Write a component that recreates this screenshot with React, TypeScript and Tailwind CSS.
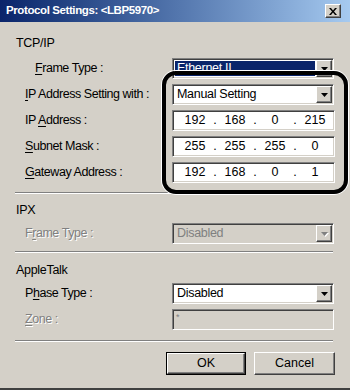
import React from 'react';

const font = { fontFamily: "'Liberation Sans', Arial, sans-serif" };

const sunken =
  'border border-t-[#808080] border-l-[#808080] border-b-white border-r-white shadow-[inset_1px_1px_0_#404040,inset_-1px_-1px_0_#d4d0c8]';
const raised =
  'border border-t-white border-l-white border-b-[#404040] border-r-[#404040] shadow-[inset_-1px_-1px_0_#808080]';

const Arrow: React.FC<{ disabled?: boolean }> = ({ disabled }) => (
  <div className={`w-[16px] h-[17px] bg-[#d4d0c8] flex items-center justify-center ${raised}`}>
    <svg width="7" height="4" viewBox="0 0 7 4" className={disabled ? 'drop-shadow-[1px_1px_0_#fff]' : ''}>
      <path d="M0 0h7L3.5 4z" fill={disabled ? '#808080' : '#000'} />
    </svg>
  </div>
);

const Combo: React.FC<{ value: string; selected?: boolean; disabled?: boolean }> = ({ value, selected, disabled }) => (
  <div className={`w-[162px] h-[21px] flex items-center justify-between ${disabled ? 'bg-[#d4d0c8]' : 'bg-white'} ${sunken} px-[1px]`}>
    <span
      className={`ml-[1px] h-[15px] flex items-center px-[2px] text-[12.5px] tracking-[-0.3px] leading-none ${
        selected ? 'bg-[#0a246a] text-white w-[140px]' : disabled ? 'text-[#808080]' : 'text-black'
      }`}
    >
      {value}
    </span>
    <Arrow disabled={disabled} />
  </div>
);

const IpField: React.FC<{ parts: string[] }> = ({ parts }) => (
  <div className={`w-[163px] h-[21px] bg-white flex items-center pl-[7px] text-[12.5px] ${sunken}`}>
    {parts.map((p, i) => (
      <React.Fragment key={i}>
        <span className="w-[30px] text-center">{p}</span>
        {i < 3 && <span className="w-[10px] text-center">.</span>}
      </React.Fragment>
    ))}
  </div>
);

const Label: React.FC<{ text: string; u: number; indent?: boolean; disabled?: boolean }> = ({ text, u, indent, disabled }) => (
  <span
    className={`${indent ? 'pl-[35px]' : 'pl-[25px]'} w-[172px] shrink-0 text-[12.5px] tracking-[-0.45px] ${
      disabled ? 'text-[#808080] [text-shadow:1px_1px_0_#fff]' : 'text-black'
    }`}
  >
    {text.slice(0, u)}
    <span className="underline underline-offset-2">{text[u]}</span>
    {text.slice(u + 1)}
  </span>
);

const Separator: React.FC<{ className?: string }> = ({ className }) => (
  <div className={`mx-[15px] w-[318px] h-[2px] border-t border-t-[#808080] border-b border-b-white ${className ?? ''}`} />
);

export default function App() {
  return (
    <div className="w-[350px] h-[390px] bg-[#d4d0c8] relative overflow-hidden border-b-2 border-b-[#404040]" style={font}>
      {/* Title bar */}
      <div className="h-[22px] bg-gradient-to-r from-[#0a246a] to-[#a6caf0] flex items-center justify-between pl-[6px] pr-[9px]">
        <span className="text-white font-bold text-[11.5px] tracking-[-0.4px]">Protocol Settings: &lt;LBP5970&gt;</span>
        <div className={`w-[16px] h-[14px] bg-[#d4d0c8] flex items-center justify-center ${raised}`}>
          <svg width="8" height="7" viewBox="0 0 8 7">
            <path d="M0 0h2l2 2.5L6 0h2L5 3.5 8 7H6L4 4.5 2 7H0l3-3.5z" fill="#000" />
          </svg>
        </div>
      </div>

      {/* TCP/IP */}
      <div className="pl-[16px] mt-[13px] h-[16px] leading-[16px] text-[12.5px] tracking-[-0.3px]">TCP/IP</div>
      <div className="flex flex-col gap-[5px] mt-[7px]">
        <div className="flex items-center h-[21px]">
          <Label text="Frame Type :" u={0} indent />
          <Combo value="Ethernet II" selected />
        </div>
        <div className="flex items-center h-[21px]">
          <Label text="IP Address Setting with :" u={0} />
          <Combo value="Manual Setting" />
        </div>
        <div className="flex items-center h-[21px]">
          <Label text="IP Address :" u={3} />
          <IpField parts={['192', '168', '0', '215']} />
        </div>
        <div className="flex items-center h-[21px]">
          <Label text="Subnet Mask :" u={0} />
          <IpField parts={['255', '255', '255', '0']} />
        </div>
        <div className="flex items-center h-[21px]">
          <Label text="Gateway Address :" u={0} />
          <IpField parts={['192', '168', '0', '1']} />
        </div>
      </div>

      <Separator className="mt-[9px]" />

      {/* IPX */}
      <div className="pl-[16px] mt-[8px] h-[16px] leading-[16px] text-[12.5px] tracking-[-0.3px]">IPX</div>
      <div className="flex items-center h-[21px] mt-[5px]">
        <Label text="Frame Type :" u={1} disabled />
        <Combo value="Disabled" disabled />
      </div>

      <Separator className="mt-[7px]" />

      {/* AppleTalk */}
      <div className="pl-[16px] mt-[9px] h-[16px] leading-[16px] text-[12.5px] tracking-[-0.3px]">AppleTalk</div>
      <div className="flex flex-col gap-[5px] mt-[5px]">
        <div className="flex items-center h-[21px]">
          <Label text="Phase Type :" u={1} />
          <Combo value="Disabled" />
        </div>
        <div className="flex items-center h-[21px]">
          <Label text="Zone :" u={0} disabled />
          <div className={`w-[162px] h-[21px] bg-[#d4d0c8] ${sunken} flex items-start pl-[3px] pt-[1px]`}>
            <span className="text-[#808080] text-[9px]">*</span>
          </div>
        </div>
      </div>

      <Separator className="mt-[10px]" />

      {/* Buttons */}
      <div className="flex justify-end gap-[8px] pr-[15px] mt-[10px]">
        <div className="w-[80px] h-[23px] border border-black">
          <div className={`w-full h-full bg-[#d4d0c8] flex items-center justify-center text-[12.5px] ${raised}`}>OK</div>
        </div>
        <div className={`w-[81px] h-[23px] bg-[#d4d0c8] flex items-center justify-center text-[12.5px] ${raised}`}>Cancel</div>
      </div>

      {/* Annotation highlight */}
      <div className="absolute left-[162px] top-[71px] w-[186px] h-[123px] rounded-[14px] border-[4px] border-black shadow-[0_0_0_1px_#fff] pointer-events-none" />
    </div>
  );
}
